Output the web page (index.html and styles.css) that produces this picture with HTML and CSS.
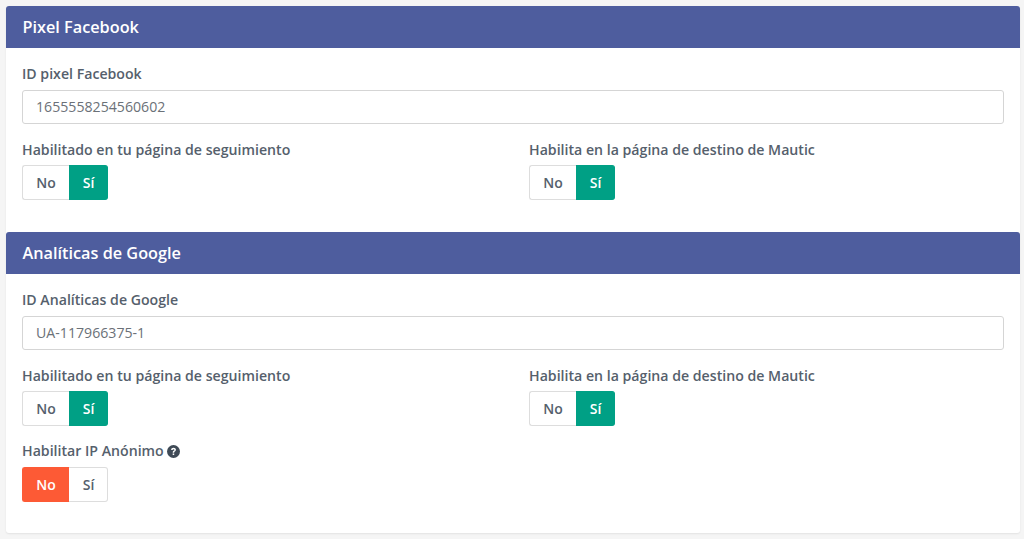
FILE: index.html
```html
<!DOCTYPE html>
<html lang="es">
<head>
    <meta charset="UTF-8">
    <meta name="viewport" content="width=device-width, initial-scale=1.0">
    <title>Tracking</title>
    <link rel="stylesheet" href="styles.css">
</head>
<body>
    <div class="panel">
        <!-- Facebook -->
        <div class="panel-heading">Pixel Facebook</div>
        <div class="panel-body">
            <label class="field-label">ID pixel Facebook</label>
            <input class="field-input" type="text" value="1655558254560602">
            <div class="row">
                <div class="col">
                    <label class="field-label">Habilitado en tu página de seguimiento</label>
                    <div class="toggle">
                        <span class="toggle-btn no">No</span>
                        <span class="toggle-btn si active-yes">Sí</span>
                    </div>
                </div>
                <div class="col">
                    <label class="field-label">Habilita en la página de destino de Mautic</label>
                    <div class="toggle">
                        <span class="toggle-btn no">No</span>
                        <span class="toggle-btn si active-yes">Sí</span>
                    </div>
                </div>
            </div>
        </div>

        <!-- Google -->
        <div class="panel-heading">Analíticas de Google</div>
        <div class="panel-body last">
            <label class="field-label">ID Analíticas de Google</label>
            <input class="field-input" type="text" value="UA-117966375-1">
            <div class="row">
                <div class="col">
                    <label class="field-label">Habilitado en tu página de seguimiento</label>
                    <div class="toggle">
                        <span class="toggle-btn no">No</span>
                        <span class="toggle-btn si active-yes">Sí</span>
                    </div>
                </div>
                <div class="col">
                    <label class="field-label">Habilita en la página de destino de Mautic</label>
                    <div class="toggle">
                        <span class="toggle-btn no">No</span>
                        <span class="toggle-btn si active-yes">Sí</span>
                    </div>
                </div>
            </div>
            <div class="row-single">
                <label class="field-label">Habilitar IP Anónimo
                    <svg class="help-icon" viewBox="0 0 24 24" width="13" height="13">
                        <circle cx="12" cy="12" r="12" fill="#3f4a56"/>
                        <path d="M7.6 9.2c0-2.5 2-4.1 4.5-4.1 2.4 0 4.4 1.5 4.4 3.8 0 1.7-1 2.5-2.1 3.2-.9.5-1.1.9-1.1 1.7v.3h-2.7v-.7c0-1.5.6-2.3 1.7-2.9.9-.5 1.4-.9 1.4-1.5 0-.8-.7-1.3-1.6-1.3-1 0-1.6.6-1.8 1.6z" fill="#fff"/>
                        <rect x="10.5" y="15.6" width="2.8" height="2.9" fill="#fff"/>
                    </svg>
                </label>
                <div class="toggle">
                    <span class="toggle-btn no active-no">No</span>
                    <span class="toggle-btn si">Sí</span>
                </div>
            </div>
        </div>
    </div>
</body>
</html>
```

FILE: styles.css
```css
body { margin: 0; background: #f5f5f5; padding: 6px 4px 6px 6px; font-family: "Open Sans", sans-serif; font-size: 14px; color: #55606c; }
.panel { background: white; border-radius: 3px; box-shadow: 0 1px 2px rgba(0, 0, 0, 0.08); }
.panel-heading { background: #4e5d9e; color: white; font-size: 16.25px; font-weight: 600; height: 42px; line-height: 42px; padding: 0 16.5px; border-radius: 3px 3px 0 0; }
.panel-body { padding: 16px 16px 32px 16px; }
.panel-body.last { padding-bottom: 31px; }
.field-label { display: block; font-weight: 600; font-size: 14.15px; line-height: 20px; margin-bottom: 5px; }
.field-input { display: block; box-sizing: border-box; width: 100%; height: 34px; padding: 0 13px 2px; margin: 6px 0 16px; border: 1px solid #d5d5d5; border-radius: 3px; font-family: inherit; font-size: 14.15px; color: #6b7178; background: white; }
.row { display: flex; }
.col { flex: none; width: 507px; }
.row-single { margin-top: 15px; }
.row-single .toggle { margin-top: 6px; }
.toggle { display: flex; width: 86px; height: 35px; }
.toggle-btn { display: flex; align-items: center; justify-content: center; box-sizing: border-box; font-weight: 600; font-size: 14px; border: 1px solid #dddddd; }
.no { width: 47px; border-right: 0; border-radius: 3px 0 0 3px; }
.si { width: 39px; padding-left: 1px; border-left: 0; border-radius: 0 3px 3px 0; }
.active-yes { background: #00a085; border-color: #00a085; color: white; }
.active-no { background: #fd5a35; border-color: #fd5a35; color: white; }
.help-icon { vertical-align: -2px; margin-left: 0; }
```
